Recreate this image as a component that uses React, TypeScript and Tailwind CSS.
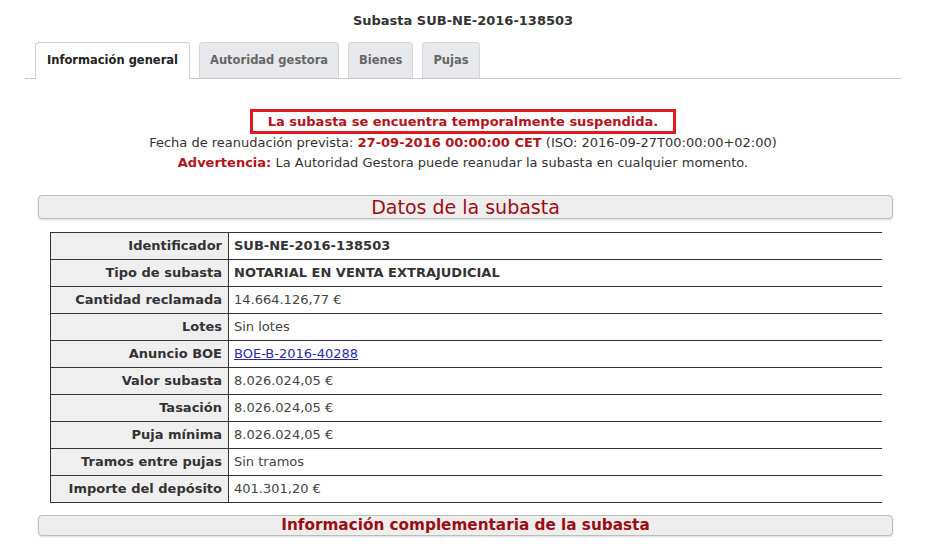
import React from "react";

const tabs = [
  { label: "Información general", active: true },
  { label: "Autoridad gestora", active: false },
  { label: "Bienes", active: false },
  { label: "Pujas", active: false },
];

const rows: { label: string; value: string; bold?: boolean; link?: boolean }[] = [
  { label: "Identificador", value: "SUB-NE-2016-138503", bold: true },
  { label: "Tipo de subasta", value: "NOTARIAL EN VENTA EXTRAJUDICIAL", bold: true },
  { label: "Cantidad reclamada", value: "14.664.126,77 €" },
  { label: "Lotes", value: "Sin lotes" },
  { label: "Anuncio BOE", value: "BOE-B-2016-40288", link: true },
  { label: "Valor subasta", value: "8.026.024,05 €" },
  { label: "Tasación", value: "8.026.024,05 €" },
  { label: "Puja mínima", value: "8.026.024,05 €" },
  { label: "Tramos entre pujas", value: "Sin tramos" },
  { label: "Importe del depósito", value: "401.301,20 €" },
];

export default function App() {
  return (
    <div className="w-[934px] h-[547px] overflow-hidden bg-white text-[#333] font-['DejaVu_Sans',Verdana,sans-serif]">
      <div className="ml-[25px] w-[876px]">
        <h1 className="pt-[11px] h-[42px] text-center text-[13px] font-bold text-[#333]">
          Subasta SUB-NE-2016-138503
        </h1>

        <div className="flex items-end gap-[9px] border-b border-[#c8c8c8] pl-[10px] h-[37px]">
          {tabs.map((t) => (
            <div
              key={t.label}
              className={
                t.active
                  ? "h-[37px] -mb-px px-[11px] flex items-center rounded-t-[4px] border border-b-0 border-[#cfcfcf] bg-white text-[11.5px] font-bold text-[#222]"
                  : "h-[36px] px-[10px] flex items-center rounded-t-[4px] border border-b-0 border-[#d4d6da] bg-[#e8e9ec] text-[11.5px] font-bold text-[#666]"
              }
            >
              {t.label}
            </div>
          ))}
        </div>

        <div className="mt-[30px] flex flex-col items-center">
          <div className="h-[25px] w-[426px] border-[3px] border-[#e11a22] flex items-center justify-center text-[13px] font-bold text-[#b3141c]">
            La subasta se encuentra temporalmente suspendida.
          </div>
          <p className="text-[13px] leading-[18px]">
            Fecha de reanudación prevista:{" "}
            <span className="font-bold text-[#b3141c]">27-09-2016 00:00:00 CET</span> (ISO: 2016-09-27T00:00:00+02:00)
          </p>
          <p className="mt-[2px] text-[13px] leading-[18px]">
            <span className="font-bold text-[#b3141c]">Advertencia:</span> La Autoridad Gestora puede reanudar la subasta en
            cualquier momento.
          </p>
        </div>

        <div className="mt-[23px] ml-[13px] mr-[8px] h-[24px] rounded-[4px] border border-[#bdbdbd] bg-[#eeeeee] shadow-[0_1px_2px_rgba(0,0,0,0.15)] flex items-center justify-center text-[19px] text-[#9b0d12]">
          Datos de la subasta
        </div>

        <table className="mt-[13px] ml-[25px] w-[832px] border-collapse text-[13px]">
          <tbody>
            {rows.map((r) => (
              <tr key={r.label} className="h-[27px]">
                <td className="w-[178px] border border-[#333] bg-[#efefef] pr-[6px] text-right font-bold text-[#333]">
                  {r.label}
                </td>
                <td
                  className={
                    "border-y border-[#333] pl-[5px] " + (r.bold ? "font-bold text-[#333]" : "text-[#444]")
                  }
                >
                  {r.link ? <a className="text-[#2a2aa6] underline">{r.value}</a> : r.value}
                </td>
              </tr>
            ))}
          </tbody>
        </table>

        <div className="mt-[12px] ml-[13px] mr-[8px] h-[21px] rounded-[4px] border border-[#bdbdbd] bg-[#eeeeee] shadow-[0_1px_2px_rgba(0,0,0,0.15)] flex items-center justify-center text-[15.25px] font-bold text-[#9b0d12]">
          Información complementaria de la subasta
        </div>
      </div>
    </div>
  );
}
